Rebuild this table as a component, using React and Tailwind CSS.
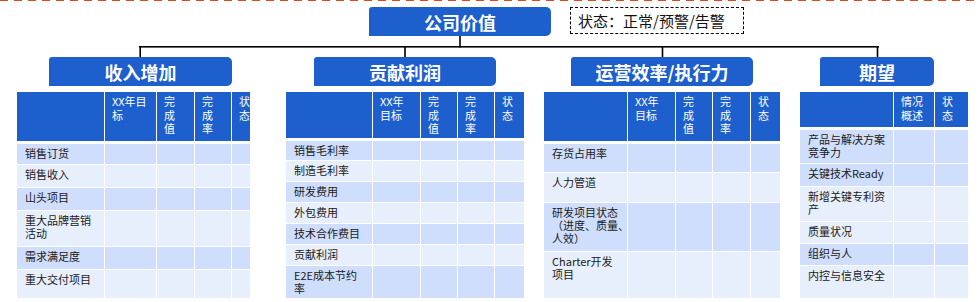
import React from 'react';

const BLUE = 'bg-[#1e5fce]';

const tables = [
    {
        title: '收入增加',
        wrap: 'w-[233px]',
        headWrap: 'ml-[32px] w-[183px]',
        cols: 'grid-cols-[87px_51px_37px_36px_36px]',
        headH: 'h-[49px]',
        heads: [<>XX年目<br />标</>, <>完<br />成<br />值</>, <>完<br />成<br />率</>, <>状<br />态</>],
        rows: [
            { label: '销售订货', h: 'h-[20px]', dark: true },
            { label: '销售收入', h: 'h-[22px]' },
            { label: '山头项目', h: 'h-[22px]', dark: true },
            { label: <>重大品牌营销<br />活动</>, h: 'h-[35px]' },
            { label: '需求满足度', h: 'h-[22px]', dark: true },
            { label: '重大交付项目', h: 'h-[28px]' },
        ],
    },
    {
        title: '贡献利润',
        wrap: 'w-[238px] ml-[36px]',
        headWrap: 'ml-[28px] w-[182px]',
        cols: 'grid-cols-[86px_47px_36px_36px_29px]',
        headH: 'h-[46px]',
        heads: [<>XX年<br />目标</>, <>完<br />成<br />值</>, <>完<br />成<br />率</>, <>状<br />态</>],
        rows: [
            { label: '销售毛利率', h: 'h-[19px]', dark: true },
            { label: '制造毛利率', h: 'h-[20px]' },
            { label: '研发费用', h: 'h-[20px]', dark: true },
            { label: '外包费用', h: 'h-[20px]' },
            { label: '技术合作费目', h: 'h-[20px]', dark: true },
            { label: '贡献利润', h: 'h-[20px]' },
            { label: <>E2E成本节约<br />率</>, h: 'h-[32px]', dark: true },
        ],
    },
    {
        title: '运营效率/执行力',
        wrap: 'w-[236px] ml-[20px]',
        headWrap: 'ml-[27px] w-[182px]',
        cols: 'grid-cols-[83px_47px_36px_37px_29px]',
        headH: 'h-[49px]',
        heads: [<>XX年<br />目标</>, <>完<br />成<br />值</>, <>完<br />成<br />率</>, <>状<br />态</>],
        rows: [
            { label: '存货占用率', h: 'h-[28px]', dark: true },
            { label: '人力管道', h: 'h-[29px]' },
            { label: <>研发项目状态<br />（进度、质量、<br />人效）</>, h: 'h-[48px]', dark: true },
            { label: <>Charter开发<br />项目</>, h: 'h-[46px]' },
        ],
    },
    {
        title: '期望',
        wrap: 'w-[168px] ml-[20px]',
        headWrap: 'ml-[20px] w-[114px]',
        cols: 'grid-cols-[93px_40px_33px]',
        headH: 'h-[35px]',
        heads: [<>情况<br />概述</>, <>状<br />态</>],
        rows: [
            { label: <>产品与解决方案<br />竞争力</>, h: 'h-[33px]', dark: true },
            { label: '关键技术Ready', h: 'h-[22px]', dark: true },
            { label: <>新增关键专利资<br />产</>, h: 'h-[34px]' },
            { label: '质量状况', h: 'h-[21px]' },
            { label: '组织与人', h: 'h-[21px]', dark: true },
            { label: '内控与信息安全', h: 'h-[32px]' },
        ],
    },
];

const Section = ({ t }) => (
    <div className={`flex flex-col ${t.wrap}`}>
        <div className={`${t.headWrap} h-[29px] ${BLUE} rounded-tl-[3px] rounded-r-[5px] flex items-center justify-center text-white font-bold text-[18px] leading-none`}>
            {t.title}
        </div>
        <div className="mt-[6px] overflow-hidden text-[11px]">
            {/* header row */}
            <div className={`grid gap-x-px ${t.cols}`}>
                <div className={`${BLUE} ${t.headH}`} />
                {t.heads.map((h, i) => (
                    <div key={i} className={`${BLUE} ${t.headH} text-white pl-[7px] pt-[3px] leading-[13.7px] whitespace-nowrap`}>
                        {h}
                    </div>
                ))}
            </div>
            {/* body rows */}
            <div className={`grid gap-px mt-[3px] ${t.cols}`}>
                {t.rows.map((r, ri) => {
                    const bg = r.dark ? 'bg-[#cfdefc]' : 'bg-[#e8effc]';
                    return (
                        <React.Fragment key={ri}>
                            <div className={`${bg} ${r.h} pl-[8px] pt-[3px] leading-[13px] text-[#1a1a1a] whitespace-nowrap`}>
                                {r.label}
                            </div>
                            {t.heads.map((_, ci) => (
                                <div key={ci} className={`${bg} ${r.h}`} />
                            ))}
                        </React.Fragment>
                    );
                })}
            </div>
        </div>
    </div>
);

export default function App() {
    return (
        <div className="w-[979px] h-[302px] bg-white overflow-hidden font-['Microsoft_YaHei','Noto_Sans_CJK_SC',sans-serif]">
            <div className="h-px bg-[repeating-linear-gradient(90deg,#d9481f_0_8px,transparent_8px_14px)]" />

            <div className="flex items-start mt-[6px] h-[29px]">
                <div className={`ml-[369px] w-[182px] h-[29px] ${BLUE} rounded-tl-[3px] rounded-r-[5px] flex items-center justify-center text-white font-bold text-[18px] leading-none`}>
                    公司价值
                </div>
                <div className="ml-[19px] w-[174px] h-[27px] border border-dashed border-black flex items-center pl-[7px] text-[15px] text-[#111] leading-none">
                    状态：正常/预警/告警
                </div>
            </div>

            {/* connector lines */}
            <svg width="979" height="21" className="block">
                <rect x="459.2" y="0" width="1.6" height="11.5" fill="#000" />
                <rect x="139" y="10" width="740" height="1.6" fill="#000" />
                <rect x="139.4" y="10" width="1.6" height="11" fill="#000" />
                <rect x="404.2" y="10" width="1.6" height="11" fill="#000" />
                <rect x="661.7" y="10" width="1.6" height="11" fill="#000" />
                <rect x="876.7" y="10" width="1.6" height="11" fill="#000" />
            </svg>

            <div className="flex pl-[17px]">
                {tables.map((t, i) => (
                    <Section key={i} t={t} />
                ))}
            </div>
        </div>
    );
}
